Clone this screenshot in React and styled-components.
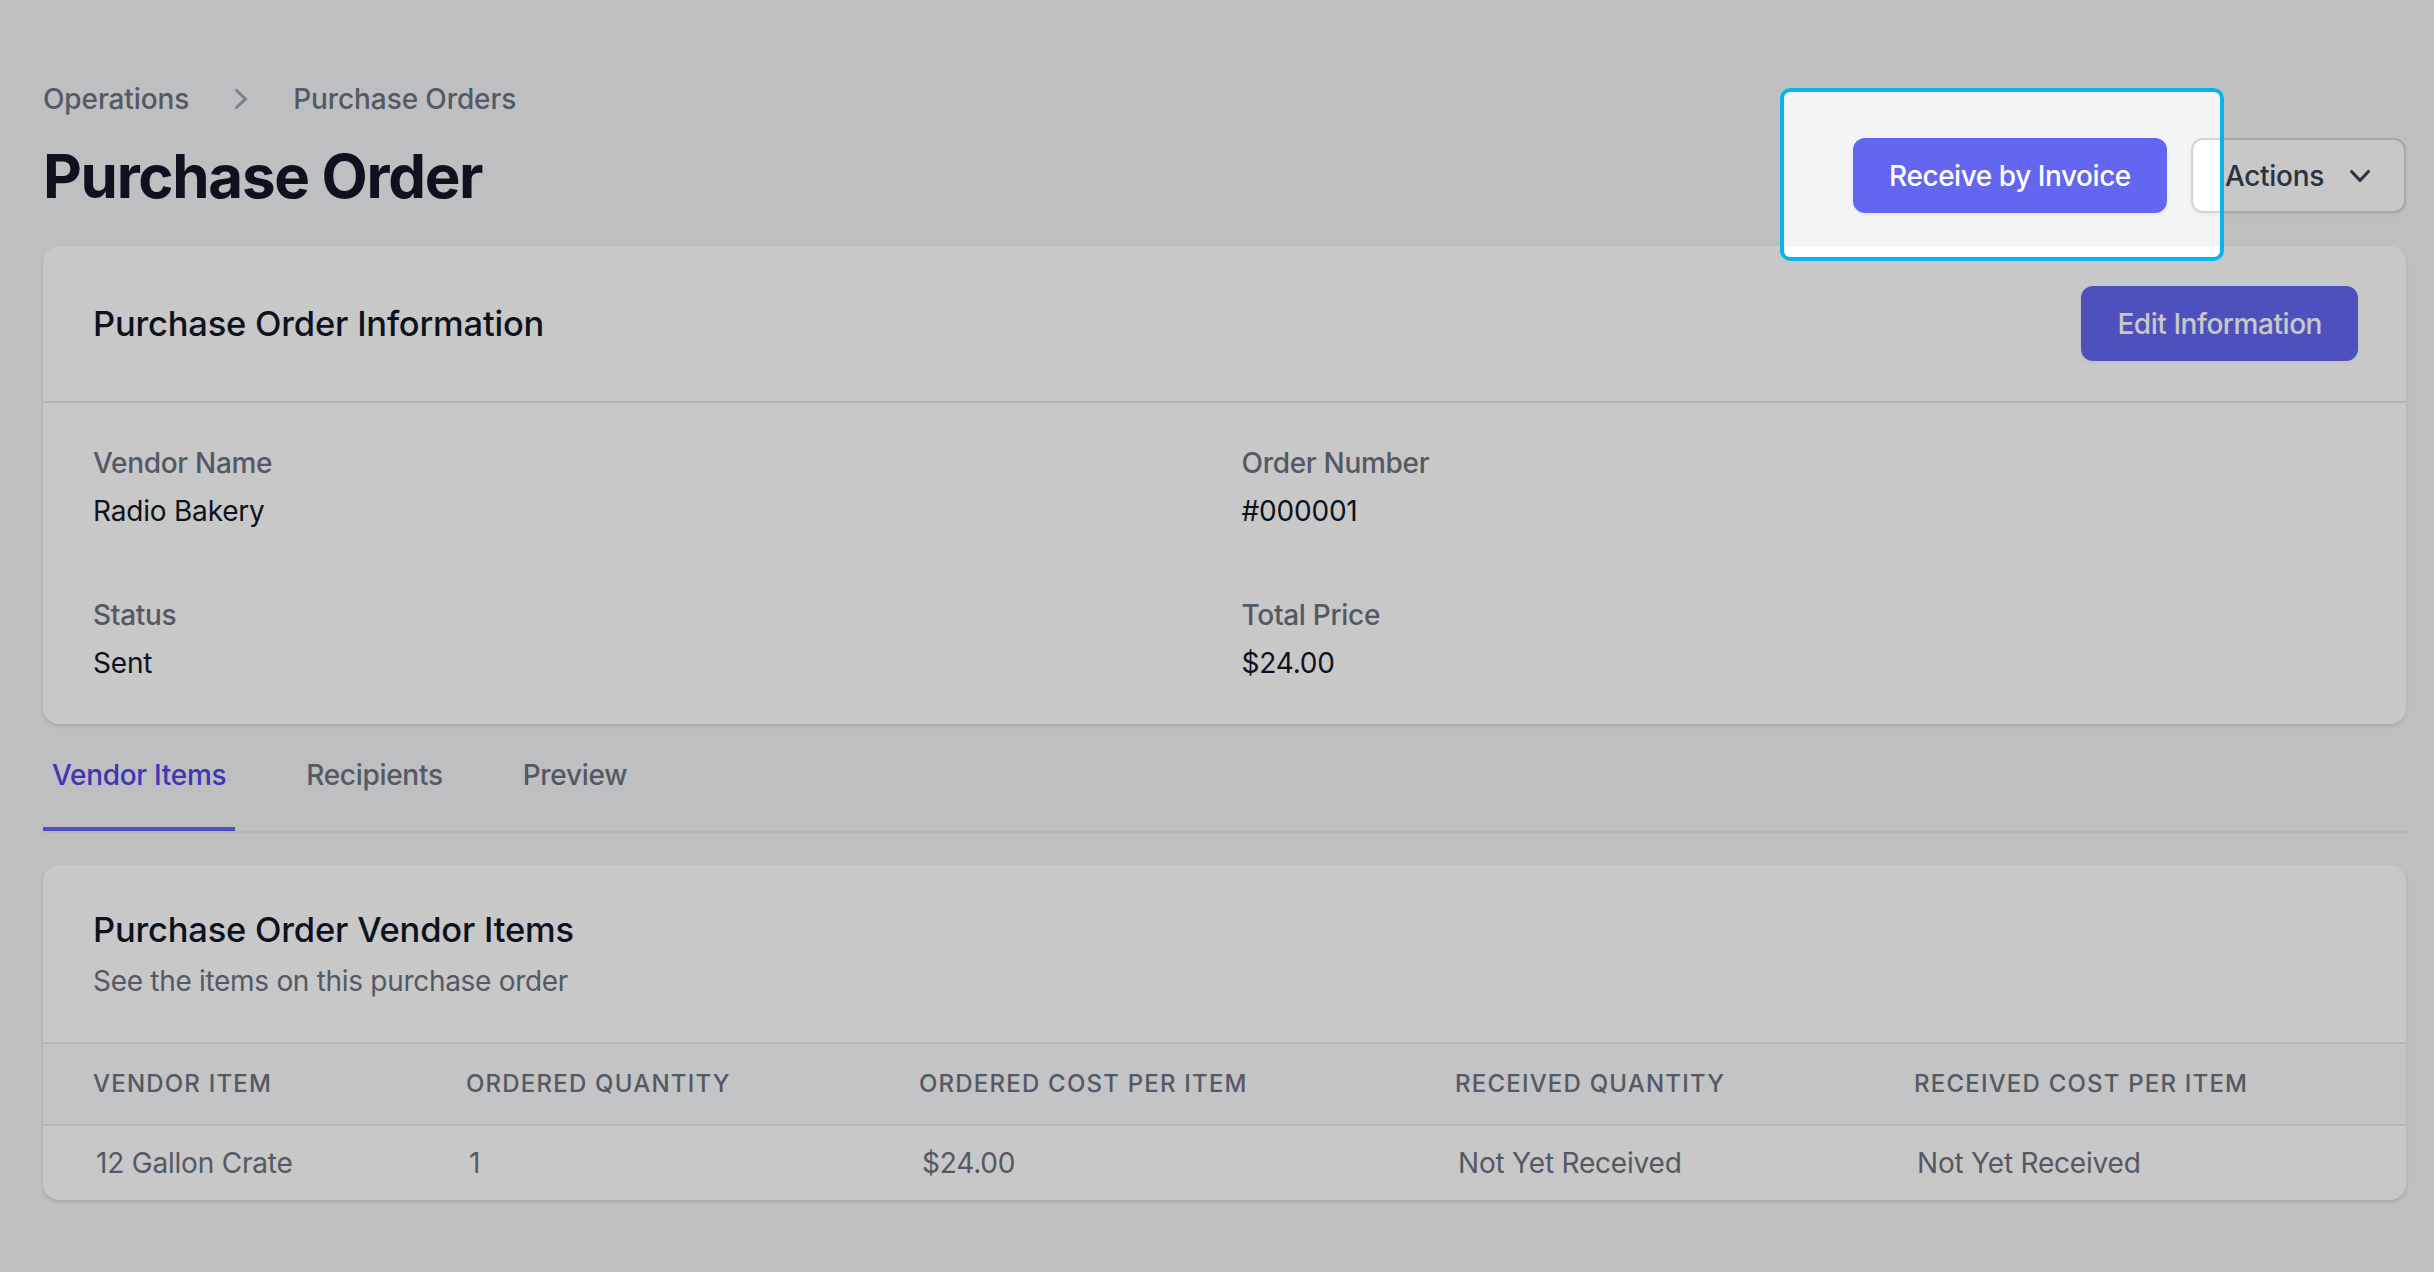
import React from 'react';
import styled, { createGlobalStyle } from 'styled-components';

const GlobalStyle = createGlobalStyle`
  html, body {
    margin: 0;
    background: #f3f4f6;
  }
  body {
    font-family: Inter, "Noto Sans", sans-serif;
    color: #111827;
    overflow: hidden;
  }
`;

const ChevronRight = () => (
  <svg viewBox="0 0 20 20" fill="currentColor" width="40" height="40">
    <path
      fillRule="evenodd"
      d="M7.21 14.77a.75.75 0 01.02-1.06L11.168 10 7.23 6.29a.75.75 0 111.04-1.08l4.5 4.25a.75.75 0 010 1.08l-4.5 4.25a.75.75 0 01-1.06-.02z"
      clipRule="evenodd"
    />
  </svg>
);

const ChevronDown = () => (
  <svg viewBox="0 0 20 20" fill="currentColor" width="40" height="40">
    <path
      fillRule="evenodd"
      d="M5.23 7.21a.75.75 0 011.06.02L10 11.168l3.71-3.938a.75.75 0 111.08 1.04l-4.25 4.5a.75.75 0 01-1.08 0l-4.25-4.5a.75.75 0 01.02-1.06z"
      clipRule="evenodd"
    />
  </svg>
);

const info = [
  { label: 'Vendor Name', value: 'Radio Bakery' },
  { label: 'Order Number', value: '#000001' },
  { label: 'Status', value: 'Sent' },
  { label: 'Total Price', value: '$24.00' },
];

const columns = [
  'Vendor Item',
  'Ordered Quantity',
  'Ordered Cost Per Item',
  'Received Quantity',
  'Received Cost Per Item',
];

const rows = [['12 Gallon Crate', '1', '$24.00', 'Not Yet Received', 'Not Yet Received']];

const tabs = ['Vendor Items', 'Recipients', 'Preview'];

const App = () => {
  return (
    <>
      <GlobalStyle />
      <Page>
        <Breadcrumb>
          <Crumb>Operations</Crumb>
          <Separator>
            <ChevronRight />
          </Separator>
          <Crumb>Purchase Orders</Crumb>
        </Breadcrumb>

        <HeaderRow>
          <Title>Purchase Order</Title>
          <HeaderActions>
            <SpotWrap>
              <PrimaryButton>Receive by Invoice</PrimaryButton>
              <Spotlight />
            </SpotWrap>
            <SecondaryButton>
              Actions
              <ChevronDown />
            </SecondaryButton>
          </HeaderActions>
        </HeaderRow>

        <Card>
          <CardHeader>
            <div>
              <CardTitle>Purchase Order Information</CardTitle>
            </div>
            <PrimaryButton>Edit Information</PrimaryButton>
          </CardHeader>
          <InfoGrid>
            {info.map((item) => (
              <div key={item.label}>
                <Label>{item.label}</Label>
                <Value>{item.value}</Value>
              </div>
            ))}
          </InfoGrid>
        </Card>

        <TabList>
          {tabs.map((tab, i) => (
            <Tab key={tab} $active={i === 0}>
              {tab}
            </Tab>
          ))}
        </TabList>

        <Card $gap>
          <CardHeader $stack>
            <CardTitle>Purchase Order Vendor Items</CardTitle>
            <Subtitle>See the items on this purchase order</Subtitle>
          </CardHeader>
          <TableHead>
            {columns.map((c) => (
              <HeadCell key={c}>{c}</HeadCell>
            ))}
          </TableHead>
          {rows.map((r, i) => (
            <TableRow key={i}>
              {r.map((cell, j) => (
                <Cell key={j}>{cell}</Cell>
              ))}
            </TableRow>
          ))}
        </Card>
      </Page>
    </>
  );
};

const Page = styled.div`
  box-sizing: border-box;
  min-height: 100vh;
  padding: 79px 28px 60px 43px;
`;

const Breadcrumb = styled.nav`
  display: flex;
  align-items: center;
  font-size: 28px;
  line-height: 40px;
  font-weight: 500;
  letter-spacing: -0.1px;
  color: #6b7280;
`;

const Crumb = styled.span`
  white-space: nowrap;
`;

const Separator = styled.span`
  display: flex;
  color: #9ca3af;
  margin: 0 32px;
`;

const HeaderRow = styled.div`
  display: flex;
  justify-content: space-between;
  align-items: center;
  margin-top: 19px;
`;

const Title = styled.h1`
  margin: 0;
  font-size: 60px;
  line-height: 72px;
  font-weight: 700;
  letter-spacing: -1.3px;
  color: #111827;
`;

const HeaderActions = styled.div`
  display: flex;
  align-items: center;
  gap: 24px;
`;

const SpotWrap = styled.div`
  position: relative;
  display: flex;
`;

const Spotlight = styled.div`
  position: absolute;
  top: -50px;
  left: -73px;
  right: -57px;
  bottom: -48px;
  border: 4px solid #0ab4e8;
  border-radius: 10px;
  box-shadow: 0 0 0 9999px rgba(0, 0, 0, 0.214);
  pointer-events: none;
  z-index: 10;
`;

const PrimaryButton = styled.button`
  display: inline-flex;
  align-items: center;
  height: 75px;
  padding: 0 34px;
  border: 2px solid transparent;
  border-radius: 12px;
  background: #6366f1;
  color: #ffffff;
  font-family: inherit;
  font-size: 28px;
  font-weight: 500;
  letter-spacing: -0.45px;
  box-shadow: 0 2px 4px rgba(0, 0, 0, 0.05);
  white-space: nowrap;
`;

const SecondaryButton = styled.button`
  display: inline-flex;
  align-items: center;
  height: 75px;
  padding: 0 24px 0 32px;
  border: 2px solid #d1d5db;
  border-radius: 12px;
  background: #ffffff;
  color: #374151;
  font-family: inherit;
  font-size: 28px;
  font-weight: 500;
  letter-spacing: -0.3px;
  box-shadow: 0 2px 4px rgba(0, 0, 0, 0.05);

  svg {
    margin-left: 16px;
  }
`;

const Card = styled.section`
  margin-top: ${(p) => (p.$gap ? '32px' : '33px')};
  background: #ffffff;
  border-radius: 16px;
  box-shadow: 0 2px 4px rgba(0, 0, 0, 0.08), 0 2px 3px rgba(0, 0, 0, 0.05);
  overflow: hidden;
`;

const CardHeader = styled.div`
  display: flex;
  flex-direction: ${(p) => (p.$stack ? 'column' : 'row')};
  justify-content: space-between;
  align-items: ${(p) => (p.$stack ? 'flex-start' : 'center')};
  padding: ${(p) => (p.$stack ? '41px 48px 41px 50px' : '40px 48px 40px 50px')};
  border-bottom: 2px solid #e5e7eb;
`;

const CardTitle = styled.h3`
  margin: 0;
  font-size: 34.5px;
  line-height: 48px;
  font-weight: 500;
  letter-spacing: -0.2px;
  color: #111827;
`;

const Subtitle = styled.p`
  margin: 7px 0 0;
  font-size: 28px;
  line-height: 40px;
  letter-spacing: -0.3px;
  color: #6b7280;
`;

const InfoGrid = styled.dl`
  margin: 0;
  display: grid;
  grid-template-columns: 1fr 1fr;
  column-gap: 32px;
  row-gap: 64px;
  padding: 40px 48px 41px 50px;
`;

const Label = styled.dt`
  font-size: 28px;
  line-height: 40px;
  font-weight: 500;
  letter-spacing: -0.3px;
  color: #6b7280;
`;

const Value = styled.dd`
  margin: 8px 0 0;
  font-size: 28px;
  line-height: 40px;
  letter-spacing: -0.2px;
  color: #111827;
`;

const TabList = styled.div`
  display: flex;
  gap: 62px;
  border-bottom: 2px solid #e5e7eb;
`;

const Tab = styled.div`
  margin-top: 31px;
  padding: 0 9px 32px;
  font-size: 28px;
  line-height: 40px;
  font-weight: 500;
  letter-spacing: -0.3px;
  color: ${(p) => (p.$active ? '#4f46e5' : '#6b7280')};
  border-bottom: 4px solid ${(p) => (p.$active ? '#6366f1' : 'transparent')};
`;

const gridCols = `
  display: grid;
  grid-template-columns: 373px 453px 536px 459px 1fr;
  padding-left: 50px;
`;

const TableHead = styled.div`
  ${gridCols}
  background: #f9fafb;
  border-bottom: 2px solid #e5e7eb;
`;

const HeadCell = styled.div`
  padding: 24px 0;
  font-size: 24px;
  line-height: 32px;
  font-weight: 500;
  text-transform: uppercase;
  letter-spacing: 0.05em;
  color: #6b7280;
  white-space: nowrap;
`;

const TableRow = styled.div`
  ${gridCols}
`;

const Cell = styled.div`
  padding: 17px 0 17px 3px;
  font-size: 28px;
  line-height: 40px;
  letter-spacing: -0.2px;
  color: #6b7280;
  white-space: nowrap;
`;

export default App;
